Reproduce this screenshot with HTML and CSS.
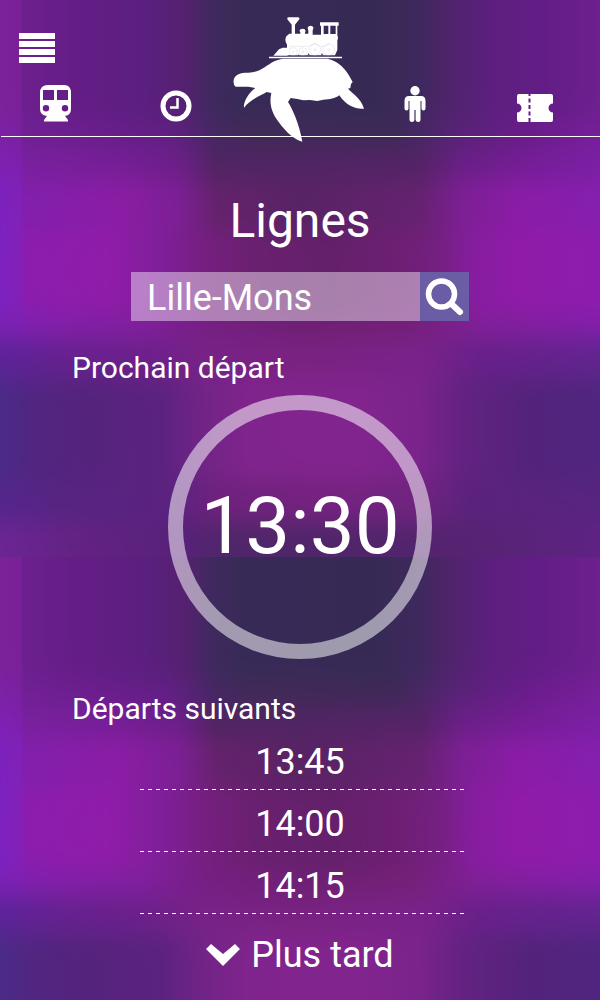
FILE: index.html
```
<!DOCTYPE html>
<html lang="fr">
<head>
<meta charset="utf-8">
<meta name="viewport" content="width=device-width, initial-scale=1">
<title>Lignes</title>
<link rel="stylesheet" href="styles.css">
</head>
<body>
<svg class="backdrop" viewBox="0 0 600 1000" preserveAspectRatio="none" aria-hidden="true">
  <defs>
    <filter id="soft" x="-20%" y="-20%" width="140%" height="140%" color-interpolation-filters="sRGB"><feGaussianBlur stdDeviation="0 11"/></filter>
    <clipPath id="edge"><rect width="600" height="557"/></clipPath>
    <linearGradient id="r1"><stop offset="0" stop-color="#7c2299"/><stop offset=".034" stop-color="#7a2098"/><stop offset=".038" stop-color="#6c208f"/><stop offset=".12" stop-color="#651d86"/><stop offset=".24" stop-color="#5b1f80"/><stop offset=".31" stop-color="#54216f"/><stop offset=".35" stop-color="#40295f"/><stop offset=".4" stop-color="#382a57"/><stop offset=".62" stop-color="#362a54"/><stop offset=".7" stop-color="#3e295e"/><stop offset=".74" stop-color="#4e2468"/><stop offset=".82" stop-color="#5c1f80"/><stop offset=".91" stop-color="#641d86"/><stop offset="1" stop-color="#6d208f"/></linearGradient>
    <linearGradient id="r2"><stop offset="0" stop-color="#7b22a6"/><stop offset=".034" stop-color="#7a20a0"/><stop offset=".038" stop-color="#702095"/><stop offset=".15" stop-color="#6b1e8c"/><stop offset=".28" stop-color="#611f84"/><stop offset=".36" stop-color="#462763"/><stop offset=".42" stop-color="#402a58"/><stop offset=".66" stop-color="#3e2958"/><stop offset=".76" stop-color="#572376"/><stop offset=".88" stop-color="#6a1c8b"/><stop offset="1" stop-color="#761f9a"/></linearGradient>
    <linearGradient id="r3"><stop offset="0" stop-color="#7e21b2"/><stop offset=".034" stop-color="#7c20ad"/><stop offset=".04" stop-color="#79209e"/><stop offset=".2" stop-color="#751e96"/><stop offset=".3" stop-color="#6b1f86"/><stop offset=".36" stop-color="#502463"/><stop offset=".5" stop-color="#502562"/><stop offset=".7" stop-color="#542366"/><stop offset=".77" stop-color="#691f86"/><stop offset=".88" stop-color="#751d96"/><stop offset="1" stop-color="#7a20a4"/></linearGradient>
    <linearGradient id="r4"><stop offset="0" stop-color="#7d21bd"/><stop offset=".034" stop-color="#8021b8"/><stop offset=".04" stop-color="#821fac"/><stop offset=".2" stop-color="#8a1da4"/><stop offset=".3" stop-color="#7b1f94"/><stop offset=".36" stop-color="#65226c"/><stop offset=".5" stop-color="#582364"/><stop offset=".7" stop-color="#652270"/><stop offset=".77" stop-color="#7c1f94"/><stop offset=".86" stop-color="#8a1ca6"/><stop offset="1" stop-color="#851faf"/></linearGradient>
    <linearGradient id="r5"><stop offset="0" stop-color="#7d22c0"/><stop offset=".034" stop-color="#8320b8"/><stop offset=".04" stop-color="#8b1dae"/><stop offset=".18" stop-color="#901ca9"/><stop offset=".27" stop-color="#7f1f99"/><stop offset=".34" stop-color="#761f80"/><stop offset=".42" stop-color="#6a2070"/><stop offset=".55" stop-color="#64206a"/><stop offset=".65" stop-color="#6c1f72"/><stop offset=".73" stop-color="#742080"/><stop offset=".79" stop-color="#861da0"/><stop offset=".87" stop-color="#901ba8"/><stop offset="1" stop-color="#8d1cae"/></linearGradient>
    <linearGradient id="r6"><stop offset="0" stop-color="#7a21b4"/><stop offset=".1" stop-color="#811fa8"/><stop offset=".24" stop-color="#801f9d"/><stop offset=".34" stop-color="#761f84"/><stop offset=".5" stop-color="#6e2074"/><stop offset=".68" stop-color="#742079"/><stop offset=".8" stop-color="#801f98"/><stop offset="1" stop-color="#811faa"/></linearGradient>
    <linearGradient id="r7"><stop offset="0" stop-color="#5c2399"/><stop offset=".1" stop-color="#65218f"/><stop offset=".24" stop-color="#6b208a"/><stop offset=".34" stop-color="#772287"/><stop offset=".5" stop-color="#7a2281"/><stop offset=".7" stop-color="#79228a"/><stop offset=".8" stop-color="#672089"/><stop offset="1" stop-color="#61248f"/></linearGradient>
    <linearGradient id="r8"><stop offset="0" stop-color="#4b2b88"/><stop offset=".05" stop-color="#502681"/><stop offset=".16" stop-color="#55237c"/><stop offset=".27" stop-color="#5c2280"/><stop offset=".34" stop-color="#722486"/><stop offset=".42" stop-color="#80248d"/><stop offset=".6" stop-color="#82248e"/><stop offset=".7" stop-color="#7a238b"/><stop offset=".77" stop-color="#632281"/><stop offset=".88" stop-color="#53237b"/><stop offset="1" stop-color="#4f267f"/></linearGradient>
    <linearGradient id="r9"><stop offset="0" stop-color="#54268c"/><stop offset=".1" stop-color="#572482"/><stop offset=".28" stop-color="#5b2280"/><stop offset=".37" stop-color="#6e227c"/><stop offset=".55" stop-color="#762281"/><stop offset=".7" stop-color="#6f247e"/><stop offset=".78" stop-color="#5b227d"/><stop offset="1" stop-color="#57247f"/></linearGradient>
    <linearGradient id="r10"><stop offset="0" stop-color="#6c2593"/><stop offset=".15" stop-color="#612282"/><stop offset=".3" stop-color="#58217a"/><stop offset=".37" stop-color="#50266a"/><stop offset=".6" stop-color="#50256a"/><stop offset=".76" stop-color="#552371"/><stop offset="1" stop-color="#5f2284"/></linearGradient>
    <g id="tile" clip-path="url(#edge)">
      <g filter="url(#soft)">
        <rect y="-60" width="600" height="180" fill="url(#r1)"/>
        <rect y="120" width="600" height="28" fill="url(#r2)"/>
        <rect y="148" width="600" height="32" fill="url(#r3)"/>
        <rect y="180" width="600" height="50" fill="url(#r4)"/>
        <rect y="230" width="600" height="82" fill="url(#r5)"/>
        <rect y="312" width="600" height="28" fill="url(#r6)"/>
        <rect y="340" width="600" height="38" fill="url(#r7)"/>
        <rect y="378" width="600" height="102" fill="url(#r8)"/>
        <rect y="480" width="600" height="42" fill="url(#r9)"/>
        <rect y="522" width="600" height="90" fill="url(#r10)"/>
      </g>
    </g>
  </defs>
  <use href="#tile"/>
  <use href="#tile" y="557"/>
</svg>

<header class="header">
  <button class="menu" type="button" aria-label="Menu"><span></span><span></span><span></span><span></span></button>
  <nav class="nav" aria-label="Navigation principale">
    <a class="nav-link" href="#lignes" aria-label="Lignes">
      <svg width="32" height="38" viewBox="0 0 32 38"><path fill="#fff" fill-rule="evenodd" d="M8 1H24Q31 1 31 9V25Q31 31 25 32L28 36V37.500H4V36L7 32Q0 31 0 25V9Q0 1 8 1ZM3 6V16H14V6ZM17 6V16H28V6ZM6 21A3.200 3.200 0 1 0 6 27.400A3.200 3.200 0 1 0 6 21ZM25 21A3.200 3.200 0 1 0 25 27.400A3.200 3.200 0 1 0 25 21Z"/></svg>
    </a>
    <a class="nav-link" href="#horaires" aria-label="Horaires">
      <svg width="32" height="32" viewBox="0 0 32 32" fill="none" stroke="#fff"><circle cx="16" cy="16" r="13" stroke-width="5"/><path d="M17.500 8V17.500H10" stroke-width="2.500"/></svg>
    </a>
    <a class="nav-link" href="#profil" aria-label="Profil">
      <svg width="22" height="36" viewBox="0 0 22 36" fill="#fff"><circle cx="11" cy="4.700" r="4.700"/><path d="M5 10H17Q21.500 10 21.500 15V22.500Q21.500 24.500 19.500 24.500T17.500 22.500V15H16.500V34Q16.500 36 14.200 36T11.600 34V24H10.400V34Q10.400 36 8 36T5.500 34V15H4.500V22.500Q4.500 24.500 2.500 24.500T.5 22.500V15Q.5 10 5 10Z"/></svg>
    </a>
    <a class="nav-link" href="#billets" aria-label="Billets">
      <svg width="36" height="28" viewBox="0 0 36 28"><path fill="#fff" d="M2 0H34Q36 0 36 2V9.500A4.500 4.500 0 0 0 36 18.500V26Q36 28 34 28H2Q0 28 0 26V18.500A4.500 4.500 0 0 0 0 9.500V2Q0 0 2 0Z"/><path d="M12.500 0V28" stroke="#641d86" stroke-width="2" stroke-dasharray="4 2.500" stroke-dashoffset="2"/></svg>
    </a>
  </nav>
  <a class="logo" href="#accueil" aria-label="Accueil">
    <svg width="134" height="127" viewBox="36 48 402 381" fill="#fff">
      <path d="M41 240C45 222 62 218 82 218C103 219 118 212 134 202C152 189 166 179 190 176H322C352 181 379 207 393 237L398 246L393 252L391 264L384 266C397 280 424 296 432 326C412 329 380 320 358 286C344 296 330 298 310 299L292 303L270 300L250 301L232 297L212 294L204 306C215 323 238 370 247 425C230 423 199 399 176 366C154 337 147 310 154 279L140 276C119 288 92 298 72 323C69 310 83 280 106 264L85 260H47Q39 256 41 240Z"/>
      <path d="M147 170H366V175H147ZM160 167L177 148L188 143H201V134Q192 121 199 109L208 101H215V74L202 58Q200 52 206 52H235Q240 53 238 58L225 74V101H241V97Q236 91 242 88Q248 84 254 88Q259 92 255 98V101H265V90Q260 81 268 78Q276 75 280 82Q281 87 278 91V104H303V77H300V67H356V77H352V104Q356 114 352 122V150L345 166H204L202 167ZM311 77V102H325V77ZM331 77V102H347V77Z" fill-rule="evenodd"/>
      <g fill="none" stroke="#c9c5d0" stroke-width="1"><circle cx="220" cy="155" r="12"/><circle cx="249" cy="155" r="12"/><circle cx="285" cy="149" r="17"/><circle cx="326" cy="149" r="17"/><circle cx="220" cy="155" r="3"/><circle cx="249" cy="155" r="3"/><circle cx="285" cy="149" r="3"/><circle cx="326" cy="149" r="3"/><path d="M205 139H266L283 130L302 139H318L328 130"/></g>
      <path d="M233 167L235 162L237 167ZM262 167L266 159L270 167ZM302 167L306 158L310 167Z" fill="#544a70"/>
    </svg>
  </a>
</header>

<main class="main">
  <h1 class="title">Lignes</h1>
  <form class="search" role="search">
    <input class="search-input" type="text" value="Lille-Mons" aria-label="Rechercher une ligne">
    <button class="search-button" type="button" aria-label="Rechercher">
      <svg width="39" height="38" viewBox="0 0 39 38" fill="none" stroke="#fff"><circle cx="16.500" cy="16" r="13" stroke-width="5.500"/><path d="M26.500 26L35 34" stroke-width="6" stroke-linecap="round"/></svg>
    </button>
  </form>
  <h2 class="subtitle">Prochain départ</h2>
  <div class="next"><time datetime="13:30">13:30</time></div>
  <h2 class="subtitle">Départs suivants</h2>
  <ul class="times">
    <li><time datetime="13:45">13:45</time></li>
    <li><time datetime="14:00">14:00</time></li>
    <li><time datetime="14:15">14:15</time></li>
  </ul>
  <button class="later" type="button">
    <svg width="34" height="22" viewBox="0 0 34 22"><path fill="#fff" d="M0 5L5 0L17 10L29 0L34 5L17 22Z"/></svg>
    <span>Plus tard</span>
  </button>
</main>
</body>
</html>
```
FILE: styles.css
```
* {
  box-sizing: border-box;
}

body {
  position: relative;
  min-height: 100vh;
  margin: 0;
  background: #5c1f80;
  color: #fff;
  font-family: Roboto, "Liberation Sans", sans-serif;
}

button {
  padding: 0;
  border: 0;
  background: none;
  color: inherit;
  font: inherit;
  cursor: pointer;
}

svg {
  display: block;
}

.backdrop {
  position: absolute;
  inset: 0;
  z-index: -1;
  width: 100%;
  height: 100%;
}

.header {
  position: relative;
  padding-top: 33px;
}

.menu {
  display: grid;
  gap: 2px;
  width: 36px;
  margin-left: 19px;
}

.menu span {
  height: 6px;
  background: #fff;
}

.nav {
  display: grid;
  grid-template-columns: 110fr 244fr 120fr 120fr;
  align-items: end;
  height: 74px;
  margin-left: 1px;
  padding: 0 5px 14px 0;
  border-bottom: 1px solid #fff;
}

.nav-link {
  justify-self: center;
}

.nav-link:nth-child(2) {
  justify-self: start;
  margin-left: 49px;
}

.logo {
  position: absolute;
  top: 16px;
  left: 50%;
  margin-left: -68px;
}

.main {
  display: flex;
  flex-direction: column;
  align-items: center;
  padding: 56px 72px 20px;
}

.title {
  margin: 0 0 23px;
  font-size: 48px;
  font-weight: 400;
  line-height: 56px;
}

.search {
  display: flex;
  width: 100%;
  max-width: 338px;
  height: 49px;
  margin-bottom: 29px;
}

.search-input {
  flex: 1;
  min-width: 0;
  padding: 2px 16px 0;
  border: 0;
  border-radius: 0;
  background: rgba(255, 255, 255, 0.43);
  color: #fff;
  font: inherit;
  font-size: 36px;
}

.search-button {
  display: grid;
  place-items: center;
  width: 49px;
  background: #6b5ca6;
}

.subtitle {
  align-self: flex-start;
  margin: 0;
  font-size: 30px;
  font-weight: 400;
  line-height: 36px;
}

.next {
  display: grid;
  place-items: center;
  width: 264px;
  height: 264px;
  margin: 9px 0 32px;
  padding-bottom: 2px;
  border: 15px solid rgba(255, 255, 255, 0.53);
  border-radius: 50%;
  font-size: 80px;
  line-height: 96px;
}

.times {
  width: 100%;
  max-width: 332px;
  margin: 1px 0 19px;
  padding: 0;
  list-style: none;
  font-size: 36px;
  line-height: 44px;
  text-align: center;
}

.times li {
  padding: 12px 0 6px;
  background: repeating-linear-gradient(90deg, #fff 0 4px, transparent 4px 8px) right bottom / calc(100% - 6px) 1px no-repeat;
}

.later {
  display: flex;
  align-items: center;
  gap: 11px;
  font-size: 36px;
  line-height: 44px;
}
```
